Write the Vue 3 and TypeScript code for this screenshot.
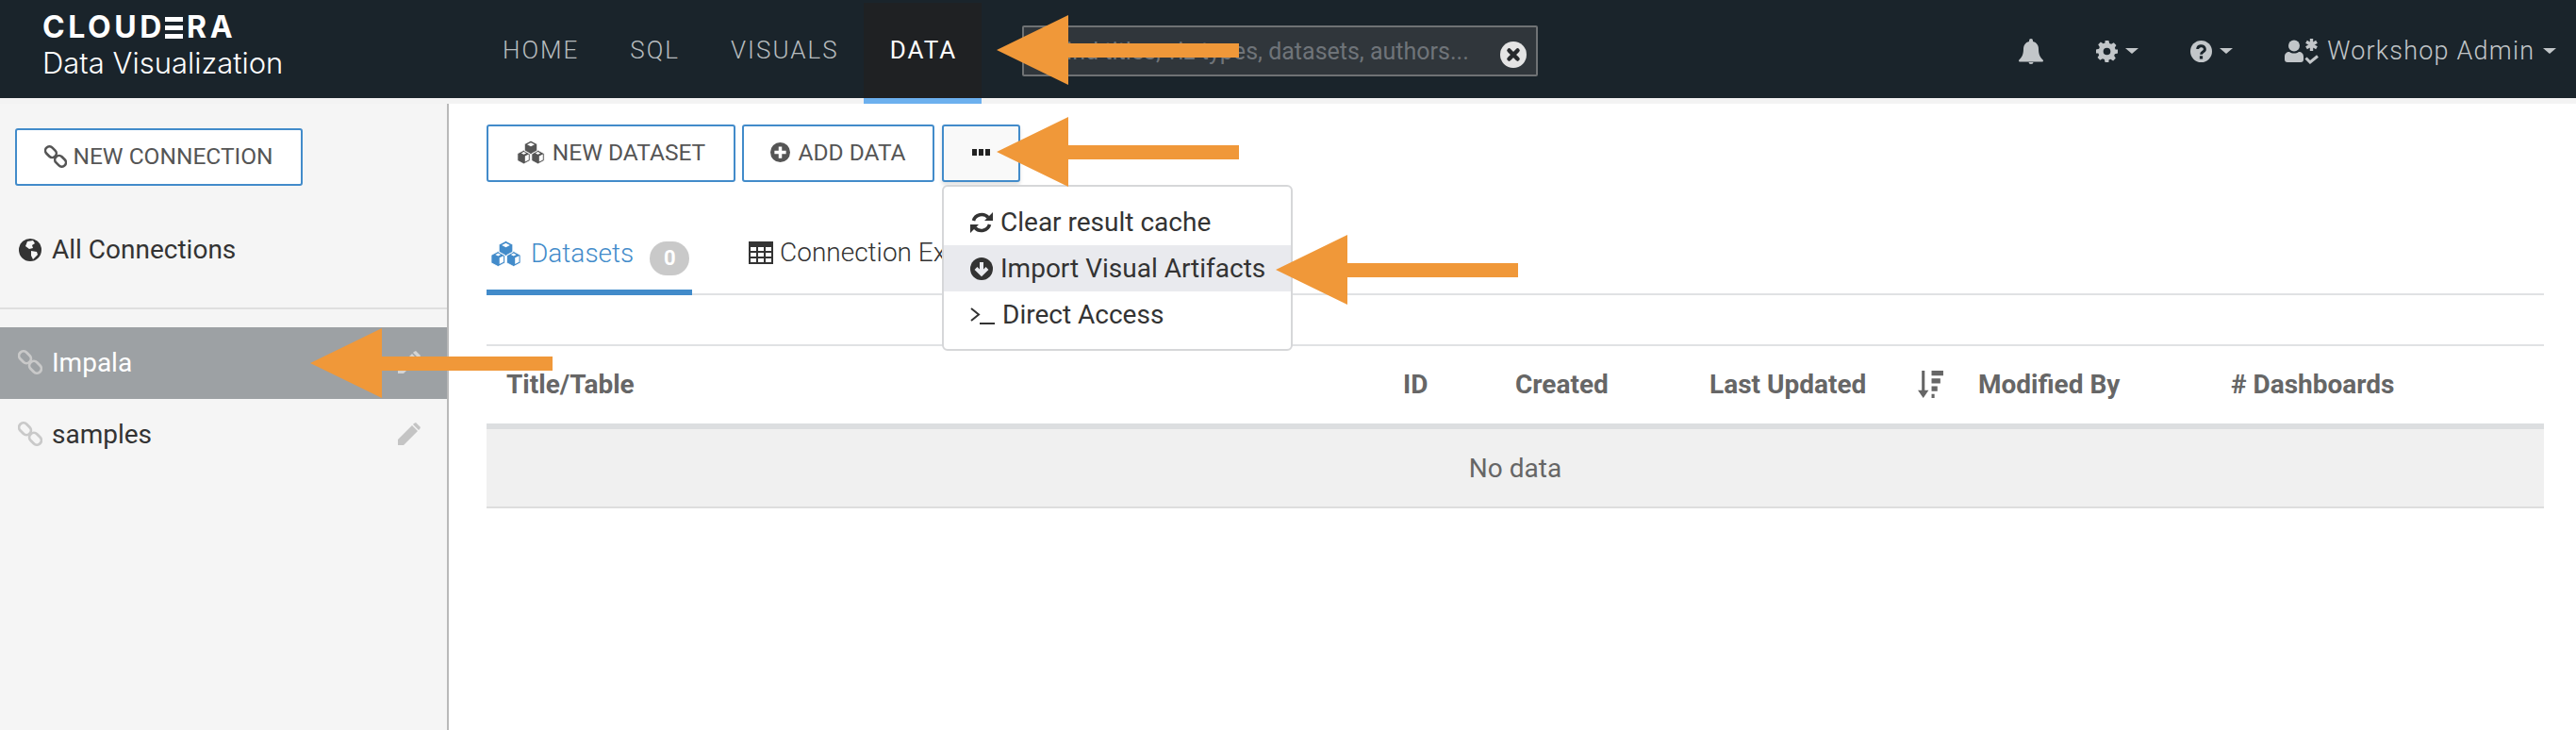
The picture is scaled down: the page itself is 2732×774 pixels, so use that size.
<script setup lang="ts">
const navItems = [
  { label: 'HOME', active: false },
  { label: 'SQL', active: false },
  { label: 'VISUALS', active: false },
  { label: 'DATA', active: true },
]

const columns = ['Title/Table', 'ID', 'Created', 'Last Updated', 'Modified By', '# Dashboards']

const arrows = [
  { left: 1057, top: 16 },
  { left: 1057, top: 124 },
  { left: 1353, top: 249 },
  { left: 329, top: 348 },
]

// three stacked cubes: outer hexagons, then the light faces on top
const cubeOuter = 'M17 0l7.500 4v8.500L17 16.500l-7.500-4V4zM8.500 11.500l7.500 4V24l-7.500 4L1 24v-8.500zM25.500 11.500l7.500 4V24l-7.500 4-7.500-4v-8.500z'
const cubeLight = 'M17 2.500l4.500 2.200L17 7l-4.500-2.300zM10 18.500l4.500-2.300V23L10 25.300zM27 18.500l4.500-2.300V23L27 25.300zM25.500 13.500l3 1.500-3 1.500-3-1.500zM8.500 13.500l3 1.500-3 1.500-3-1.500z'
const gearPath = 'M10 0h4l.8 3.200 2 .8 2.800-1.700 2.800 2.800-1.700 2.800.8 2L24 10v4l-3.200.8-.8 2 1.700 2.800-2.800 2.800-2.800-1.700-2 .8L14 24h-4l-.8-3.200-2-.8-2.800 1.700-2.800-2.800 1.700-2.800-.8-2L0 14v-4l3.200-.8.8-2-1.700-2.800 2.800-2.800 2.800 1.700 2-.8zM12 8a4 4 0 1 0 0 8 4 4 0 0 0 0-8z'
</script>

<template>
  <div class="page">
    <header class="topbar">
      <div class="brand">
        <div class="logo">CLOUD<span class="logo-e">E</span>RA</div>
        <div class="product">Data Visualization</div>
      </div>
      <nav class="nav">
        <a v-for="item in navItems" :key="item.label" class="nav-item" :class="{ active: item.active }">{{ item.label }}</a>
      </nav>
      <div class="search">
        <span class="search-text">Find titles, viz types, datasets, authors...</span>
        <svg class="search-clear" viewBox="0 0 28 28">
          <circle cx="14" cy="14" r="14" fill="#e4e4e4" />
          <path d="M9.500 9.500l9 9M18.500 9.500l-9 9" stroke="#26292c" stroke-width="4.500" stroke-linecap="round" />
        </svg>
      </div>
      <div class="top-right">
        <svg class="ic-bell" viewBox="0 0 26 27" fill="#c2c6c9">
          <path d="M13 0a2 2 0 0 1 2 2v1c4 1 6 4 6 8 0 6 2 9 5 12 0 1-.5 1.500-1.500 1.500h-23C.5 24.500 0 24 0 23c3-3 5-6 5-12 0-4 2-7 6-8V2a2 2 0 0 1 2-2zM10.500 25h5a2.500 2 0 0 1-5 0z" />
        </svg>
        <span class="menu-item">
          <svg class="ic-gear" viewBox="0 0 24 24" fill="#c2c6c9"><path :d="gearPath" fill-rule="evenodd" /></svg>
          <i class="caret"></i>
        </span>
        <span class="menu-item">
          <svg class="ic-help" viewBox="0 0 24 24">
            <circle cx="12" cy="12" r="12" fill="#c2c6c9" />
            <path d="M8 9.500a4 3.500 0 1 1 6 3c-1.500 1-2 1.500-2 3" fill="none" stroke="#1a242b" stroke-width="3" />
            <rect x="10.300" y="17" width="3.400" height="3.400" fill="#1a242b" />
          </svg>
          <i class="caret"></i>
        </span>
        <span class="menu-user">
          <svg class="ic-user" viewBox="0 0 36 27" fill="#c2c6c9">
            <circle cx="10" cy="7.500" r="6" />
            <path d="M0 22v-3c0-3 2-5 5-5 1.500 1 3 1.500 5 1.500s3.500-.5 5-1.500c3 0 5 2 5 5v3c0 2-1 3-3 3H3c-2 0-3-1-3-3z" />
            <path d="M28.500 0v13M23 3.200l11 6.600M34 3.200L23 9.800" stroke="#c2c6c9" stroke-width="3.400" />
            <path d="M22.500 20.500l4.500 4.500 8-6.500" fill="none" stroke="#c2c6c9" stroke-width="3" />
          </svg>
          <span class="user-name">Workshop Admin</span>
          <i class="caret"></i>
        </span>
      </div>
    </header>
    <div class="strip"></div>

    <div class="body">
      <aside class="sidebar">
        <div class="side-top">
          <button class="btn new-conn">
            <svg class="ic-link" viewBox="0 0 26 26" fill="none" stroke="#555" stroke-width="2.800">
              <rect x="0.500" y="3" width="14" height="9.500" rx="4.700" transform="rotate(45 7.500 7.750)" />
              <rect x="11.500" y="13.500" width="14" height="9.500" rx="4.700" transform="rotate(45 18.500 18.250)" />
            </svg>
            NEW CONNECTION
          </button>
        </div>
        <div class="all-conn">
          <svg class="ic-globe" viewBox="0 0 24 24">
            <circle cx="12" cy="12" r="12" fill="#333" />
            <path d="M9 3l6-1 2 3-3 2 1 3-4 1-4-3zM13 13l6 1 1 3-5 5-2-4z" fill="#f5f5f5" />
          </svg>
          All Connections
        </div>
        <div class="conn-row selected">
          <svg class="ic-link-big" viewBox="0 0 26 26" fill="none" stroke="#c9c9c9" stroke-width="2.800">
            <rect x="0.500" y="3" width="14" height="9.500" rx="4.700" transform="rotate(45 7.500 7.750)" />
            <rect x="11.500" y="13.500" width="14" height="9.500" rx="4.700" transform="rotate(45 18.500 18.250)" />
          </svg>
          <span class="conn-name">Impala</span>
          <svg class="ic-pencil" viewBox="0 0 24 24" fill="#d4d4d4">
            <path d="M0 18L15 3l6 6L6 24H0zM17 1l2-1 5 5-1 2-1 1-6-6z" />
          </svg>
        </div>
        <div class="conn-row">
          <svg class="ic-link-big" viewBox="0 0 26 26" fill="none" stroke="#c9c9c9" stroke-width="2.800">
            <rect x="0.500" y="3" width="14" height="9.500" rx="4.700" transform="rotate(45 7.500 7.750)" />
            <rect x="11.500" y="13.500" width="14" height="9.500" rx="4.700" transform="rotate(45 18.500 18.250)" />
          </svg>
          <span class="conn-name">samples</span>
          <svg class="ic-pencil" viewBox="0 0 24 24" fill="#c4c4c4">
            <path d="M0 18L15 3l6 6L6 24H0zM17 1l2-1 5 5-1 2-1 1-6-6z" />
          </svg>
        </div>
      </aside>

      <main class="main">
        <div class="toolbar">
          <button class="btn new-dataset">
            <svg class="ic-cubes" viewBox="0 0 34 28">
              <path :d="cubeOuter" fill="#555" stroke="#fff" stroke-width="0.800" />
              <path :d="cubeLight" fill="#fff" />
            </svg>
            NEW DATASET
          </button>
          <button class="btn add-data">
            <svg class="ic-plus" viewBox="0 0 24 24">
              <circle cx="12" cy="12" r="12" fill="#555" />
              <path d="M12 5v14M5 12h14" stroke="#fff" stroke-width="4" />
            </svg>
            ADD DATA
          </button>
          <button class="btn more">
            <i></i><i></i><i></i>
          </button>
        </div>

        <div class="tabs">
          <div class="tab active">
            <svg class="ic-cubes-tab" viewBox="0 0 34 28">
              <path :d="cubeOuter" fill="#428bca" stroke="#fff" stroke-width="0.800" />
              <path :d="cubeLight" fill="#fff" />
            </svg>
            Datasets
            <span class="badge">0</span>
          </div>
          <div class="tab">
            <svg class="ic-table" viewBox="0 0 26 24" fill="#333">
              <path d="M0 0h26v24H0zM2 6v4h6V6zm8 0v4h6V6zm8 0v4h6V6zM2 12v4h6v-4zm8 0v4h6v-4zm8 0v4h6v-4zM2 18v4h6v-4zm8 0v4h6v-4zm8 0v4h6v-4z" fill-rule="evenodd" />
            </svg>
            Connection Explorer
          </div>
        </div>

        <div class="table">
          <div class="thead">
            <span v-for="col in columns" :key="col" class="th" :class="{ sorted: col === 'Last Updated' }">
              {{ col }}
              <svg v-if="col === 'Last Updated'" class="ic-sort" viewBox="0 0 28 28" fill="#666">
                <path d="M5 0h3v20h4l-5.500 8L1 20h4zM15 0h12v5H15zM15 8h9v5h-9zM15 16h6v5h-6zM15 24h3v4h-3z" />
              </svg>
            </span>
          </div>
          <div class="no-data">No data</div>
        </div>
      </main>
    </div>

    <div class="dropdown">
      <div class="dd-item">
        <svg class="ic-dd" viewBox="0 0 24 22" fill="none" stroke="#333" stroke-width="3.600">
          <path d="M3.500 9a9 8.500 0 0 1 15.500-3.500M20.500 13a9 8.500 0 0 1-15.500 3.500" />
          <path d="M24 0v9h-9zM0 22v-9h9z" fill="#333" stroke="none" />
        </svg>
        Clear result cache
      </div>
      <div class="dd-item hover">
        <svg class="ic-dd" viewBox="0 0 24 24">
          <circle cx="12" cy="12" r="12" fill="#333" />
          <path d="M12 5v11M6 11.500l6 6 6-6" fill="none" stroke="#e9eaee" stroke-width="4" />
        </svg>
        Import Visual Artifacts
      </div>
      <div class="dd-item">
        <svg class="ic-term" viewBox="0 0 26 22" fill="none" stroke="#333" stroke-width="2">
          <path d="M1 4l8 6.500L1 17M10 20h16" />
        </svg>
        Direct Access
      </div>
    </div>

    <svg
      v-for="(a, i) in arrows"
      :key="i"
      class="arrow"
      :style="{ left: a.left + 'px', top: a.top + 'px' }"
      viewBox="0 0 257 74"
    >
      <path d="M0 37L76 0v30h181v15H76v29z" fill="#f09839" />
    </svg>
  </div>
</template>

<style>
html,
body {
  margin: 0;
  background: #fff;
}
</style>

<style scoped>
.page {
  position: relative;
  width: 2732px;
  height: 774px;
  overflow: hidden;
  font-family: Roboto, 'Liberation Sans', sans-serif;
  color: #333;
}

.topbar {
  height: 104px;
  background: #1a242b;
  display: flex;
  align-items: flex-start;
}

.brand {
  width: 533px;
  padding: 11px 0 0 45px;
  box-sizing: border-box;
  color: #fff;
  flex: none;
}

.logo {
  font-family: Inter, sans-serif;
  font-weight: 700;
  font-size: 32px;
  line-height: 36px;
  letter-spacing: 3.600px;
}

.logo-e {
  display: inline-block;
  color: transparent;
  background: repeating-linear-gradient(#fff 0 5px, transparent 5px 9px);
  background-size: calc(100% - 4px) 23px;
  background-position: 0 6.500px;
  background-repeat: no-repeat;
}

.product {
  font-family: Inter, sans-serif;
  font-size: 31px;
  line-height: 40px;
  font-weight: 300;
  white-space: nowrap;
}

.nav {
  display: flex;
  flex: none;
  height: 110px;
  margin-left: -28px;
  position: relative;
  z-index: 1;
}

.nav-item {
  box-sizing: border-box;
  height: 110px;
  padding: 38px 26px 0 28px;
  font-size: 26px;
  line-height: 30px;
  font-weight: 300;
  letter-spacing: 2px;
  color: #b7bcbf;
}

.nav-item.active {
  color: #fff;
  background: linear-gradient(#1a242b 3px, #1f2123 3px);
  border-bottom: 6px solid #6cb0ee;
  font-weight: 400;
}

.search {
  width: 547px;
  height: 54px;
  margin: 27px 0 0 43px;
  box-sizing: border-box;
  flex: none;
  background: #30363b;
  border: 2px solid #6f7274;
  border-radius: 2px;
  display: flex;
  align-items: center;
  padding: 0 10px 0 31px;
  justify-content: space-between;
}

.search-text {
  font-size: 25px;
  color: #6f7479;
  white-space: nowrap;
}

.search-clear {
  width: 28px;
  height: 28px;
  flex: none;
  margin-top: 8px;
}

.top-right {
  flex: 1;
  display: flex;
  align-items: center;
  height: 54px;
  margin-top: 27px;
  padding-left: 510px;
  color: #c2c6c9;
}

.ic-bell {
  width: 26px;
  height: 27px;
  margin-right: 56px;
}

.menu-item,
.menu-user {
  display: flex;
  align-items: center;
}

.menu-item {
  margin-right: 55px;
}

.ic-gear,
.ic-help {
  width: 23px;
  height: 23px;
  margin-right: 8px;
}

.ic-user {
  width: 36px;
  height: 27px;
  margin-right: 9px;
}

.user-name {
  font-size: 27px;
  font-weight: 300;
  letter-spacing: 1.200px;
  margin-right: 9px;
}

.caret {
  width: 0;
  height: 0;
  border-left: 7px solid transparent;
  border-right: 7px solid transparent;
  border-top: 6px solid #c2c6c9;
}

.strip {
  height: 6px;
  background: #f3f3f3;
}

.body {
  display: flex;
  height: 664px;
}

.sidebar {
  width: 476px;
  box-sizing: border-box;
  background: #f5f5f5;
  border-right: 2px solid #b9b9b9;
  flex: none;
}

.btn {
  font-family: inherit;
  background: #fff;
  border: 2px solid #428bca;
  border-radius: 3px;
  box-sizing: border-box;
  display: flex;
  align-items: center;
  justify-content: center;
  font-size: 24.500px;
  color: #555;
  padding: 0 0 2px;
}

.side-top {
  padding: 26px 0 0 16px;
}

.new-conn {
  width: 305px;
  height: 61px;
  gap: 6px;
}

.ic-link {
  width: 24px;
  height: 24px;
}

.all-conn {
  margin-top: 52px;
  height: 79px;
  padding: 0 0 0 20px;
  box-sizing: border-box;
  border-bottom: 2px solid #dfdfdf;
  display: flex;
  align-items: flex-start;
  gap: 11px;
  font-size: 28px;
  line-height: 32px;
}

.ic-globe {
  width: 24px;
  height: 24px;
  margin-top: 4px;
  flex: none;
}

.conn-row {
  height: 76px;
  box-sizing: border-box;
  display: flex;
  align-items: center;
  padding: 0 28px 2px 19px;
  font-size: 28px;
  color: #333;
  gap: 10px;
}

.conn-row.selected {
  margin-top: 19px;
  background: #9da1a4;
  color: #fff;
}

.ic-link-big {
  width: 26px;
  height: 26px;
}

.conn-name {
  flex: 1;
}

.ic-pencil {
  width: 24px;
  height: 24px;
}

.main {
  flex: 1;
  padding: 22px 34px 0 40px;
  box-sizing: border-box;
}

.toolbar {
  display: flex;
  gap: 7px;
}

.toolbar .btn {
  height: 61px;
  gap: 8px;
}

.new-dataset {
  width: 264px;
}

.add-data {
  width: 204px;
}

.toolbar .more {
  width: 83px;
  background: #f9f9f9;
  margin-left: 1px;
  gap: 2px;
  box-shadow: 0 3px 4px rgba(0, 0, 0, 0.12);
}

.more i {
  width: 5px;
  height: 7px;
  background: #222;
}

.ic-cubes {
  width: 30px;
  height: 25px;
}

.ic-plus {
  width: 21px;
  height: 21px;
}

.tabs {
  margin-top: 51px;
  height: 69px;
  box-sizing: border-box;
  border-bottom: 2px solid #e0e2e4;
  display: flex;
  align-items: flex-start;
}

.tab {
  display: flex;
  align-items: center;
  height: 69px;
  box-sizing: border-box;
  font-size: 28px;
  padding-bottom: 22px;
  flex: none;
}

.tab.active {
  color: #428bca;
  font-weight: 300;
  width: 218px;
  padding: 0 0 14px 4px;
  border-bottom: 6px solid #428bca;
}

.tab:not(.active) {
  margin-left: 60px;
  gap: 7px;
  font-weight: 300;
}

.ic-cubes-tab {
  width: 33px;
  height: 28px;
  margin-right: 10px;
}

.ic-table {
  width: 26px;
  height: 24px;
}

.badge {
  margin: 10px 0 0 17px;
  width: 42px;
  height: 36px;
  border-radius: 18px;
  background: #c9c9c9;
  color: #fff;
  font-size: 22px;
  font-weight: 700;
  display: flex;
  align-items: center;
  justify-content: center;
}

.table {
  margin-top: 52px;
  border-top: 2px solid #e0e2e4;
}

.thead {
  display: grid;
  grid-template-columns: 951px 119px 206px 285px 268px 1fr;
  height: 88px;
  box-sizing: border-box;
  padding: 0 0 2px 21px;
  align-items: center;
  border-bottom: 6px solid #dcdee0;
}

.th {
  font-size: 28px;
  font-weight: 700;
  color: #666;
  white-space: nowrap;
  display: flex;
  align-items: center;
}

.th.sorted {
  gap: 54px;
}

.ic-sort {
  width: 29px;
  height: 29px;
}

.no-data {
  height: 84px;
  box-sizing: border-box;
  background: #f0f0f0;
  border-bottom: 2px solid #dddddd;
  display: flex;
  align-items: center;
  justify-content: center;
  font-size: 28px;
  color: #666;
}

.dropdown {
  position: absolute;
  left: 999px;
  top: 196px;
  width: 372px;
  height: 176px;
  box-sizing: border-box;
  background: #fff;
  border: 2px solid #d6d7d9;
  border-radius: 6px;
  padding-top: 13px;
}

.dd-item {
  height: 49px;
  display: flex;
  align-items: center;
  gap: 8px;
  padding-left: 28px;
  font-size: 28px;
  color: #333;
  white-space: nowrap;
}

.dd-item.hover {
  background: #e9eaee;
}

.ic-dd {
  width: 24px;
  height: 24px;
  flex: none;
}

.ic-term {
  width: 26px;
  height: 22px;
  flex: none;
}

.arrow {
  position: absolute;
  width: 257px;
  height: 74px;
}
</style>
